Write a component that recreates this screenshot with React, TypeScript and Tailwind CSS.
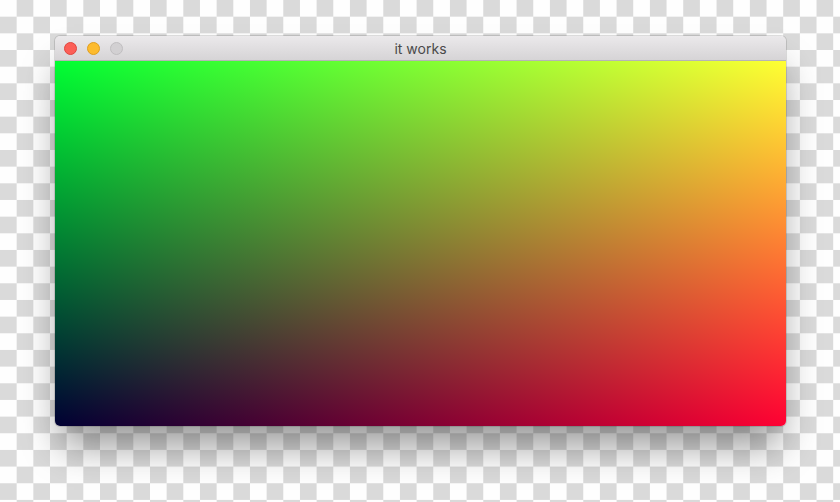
export default function App() {
  return (
    <div className="w-[840px] h-[502px] overflow-hidden bg-[conic-gradient(#dadada_25%,#fefefe_0_50%,#dadada_0_75%,#fefefe_0)] bg-size-[33.33px_33.33px] pt-[36px] pl-[55px]">
      <div className="w-[731px] h-[390px] flex flex-col rounded-[5px] overflow-hidden shadow-[0_26px_36px_-6px_rgba(0,0,0,0.4),0_0_0_1px_rgba(0,0,0,0.12)]">
        {/* title bar */}
        <div className="relative h-[25px] shrink-0 flex items-center gap-[10px] pl-[9px] bg-gradient-to-b from-[#ebe9eb] to-[#d6d4d6] border-b border-[#b6b4b6]">
          <span className="w-[13px] h-[13px] rounded-full bg-[#fc5f57] border border-[#e1463f]" />
          <span className="w-[13px] h-[13px] rounded-full bg-[#fdbb2e] border border-[#e09e1f]" />
          <span className="w-[13px] h-[13px] rounded-full bg-[#d2d0d2] border border-[#c0bec0]" />
          <span className="absolute inset-0 flex items-center justify-center text-[14px] text-[#4a4a4a] font-['Inter',sans-serif] pointer-events-none">
            it works
          </span>
        </div>
        {/* content: r = x, g = 1 - y, b const */}
        <div className="flex-1 bg-[linear-gradient(to_bottom,#00ff00,#000000),linear-gradient(to_right,#000033,#ff0033)] bg-blend-screen" />
      </div>
    </div>
  );
}
